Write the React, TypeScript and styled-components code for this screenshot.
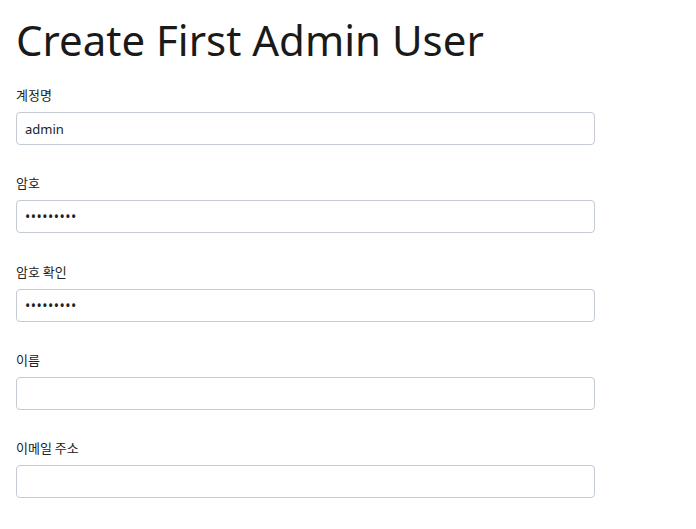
import React, { useState } from 'react';
import styled, { createGlobalStyle } from 'styled-components';

const GlobalStyle = createGlobalStyle`
  html, body {
    margin: 0;
    padding: 0;
    background: #fff;
  }
  body {
    font-family: "Noto Sans", "Noto Sans CJK KR", sans-serif;
    color: #212529;
  }
  * {
    box-sizing: border-box;
  }
`;

const Page = styled.div`
  padding: 15px 16px 0 16px;
`;

const Title = styled.h1`
  margin: 0 0 20px 0;
  font-size: 42px;
  font-weight: 400;
  line-height: 50px;
  color: #1a1a1a;
`;

const Form = styled.form`
  width: 579px;
  display: flex;
  flex-direction: column;
  gap: 28.3px;
`;

const Group = styled.div`
  display: flex;
  flex-direction: column;
  gap: 8px;
`;

const Label = styled.label`
  font-family: "Noto Sans CJK KR", sans-serif;
  font-size: 13px;
  line-height: 19px;
  color: #222;
`;

const Input = styled.input`
  height: 33px;
  width: 100%;
  padding: 0 8px;
  border: 1px solid #c4cbd2;
  border-radius: 4px;
  font-family: "Noto Sans", "Noto Sans CJK KR", sans-serif;
  font-size: 13px;
  color: #222;
  outline: none;

  &[type='password'] {
    font-size: 14px;
    letter-spacing: 0.5px;
  }
`;

type Field = { label: string; type: string; initial: string };

const fields: Field[] = [
  { label: '계정명', type: 'text', initial: 'admin' },
  { label: '암호', type: 'password', initial: '123456789' },
  { label: '암호 확인', type: 'password', initial: '123456789' },
  { label: '이름', type: 'text', initial: '' },
  { label: '이메일 주소', type: 'email', initial: '' },
];

const App = () => {
  const [values, setValues] = useState<string[]>(fields.map((f) => f.initial));

  return (
    <Page>
      <GlobalStyle />
      <Title>Create First Admin User</Title>
      <Form onSubmit={(e) => e.preventDefault()}>
        {fields.map((f, i) => (
          <Group key={f.label}>
            <Label htmlFor={`field-${i}`}>{f.label}</Label>
            <Input
              id={`field-${i}`}
              type={f.type}
              value={values[i]}
              onChange={(e) => setValues(values.map((v, j) => (j === i ? e.target.value : v)))}
            />
          </Group>
        ))}
      </Form>
    </Page>
  );
};

export default App;
